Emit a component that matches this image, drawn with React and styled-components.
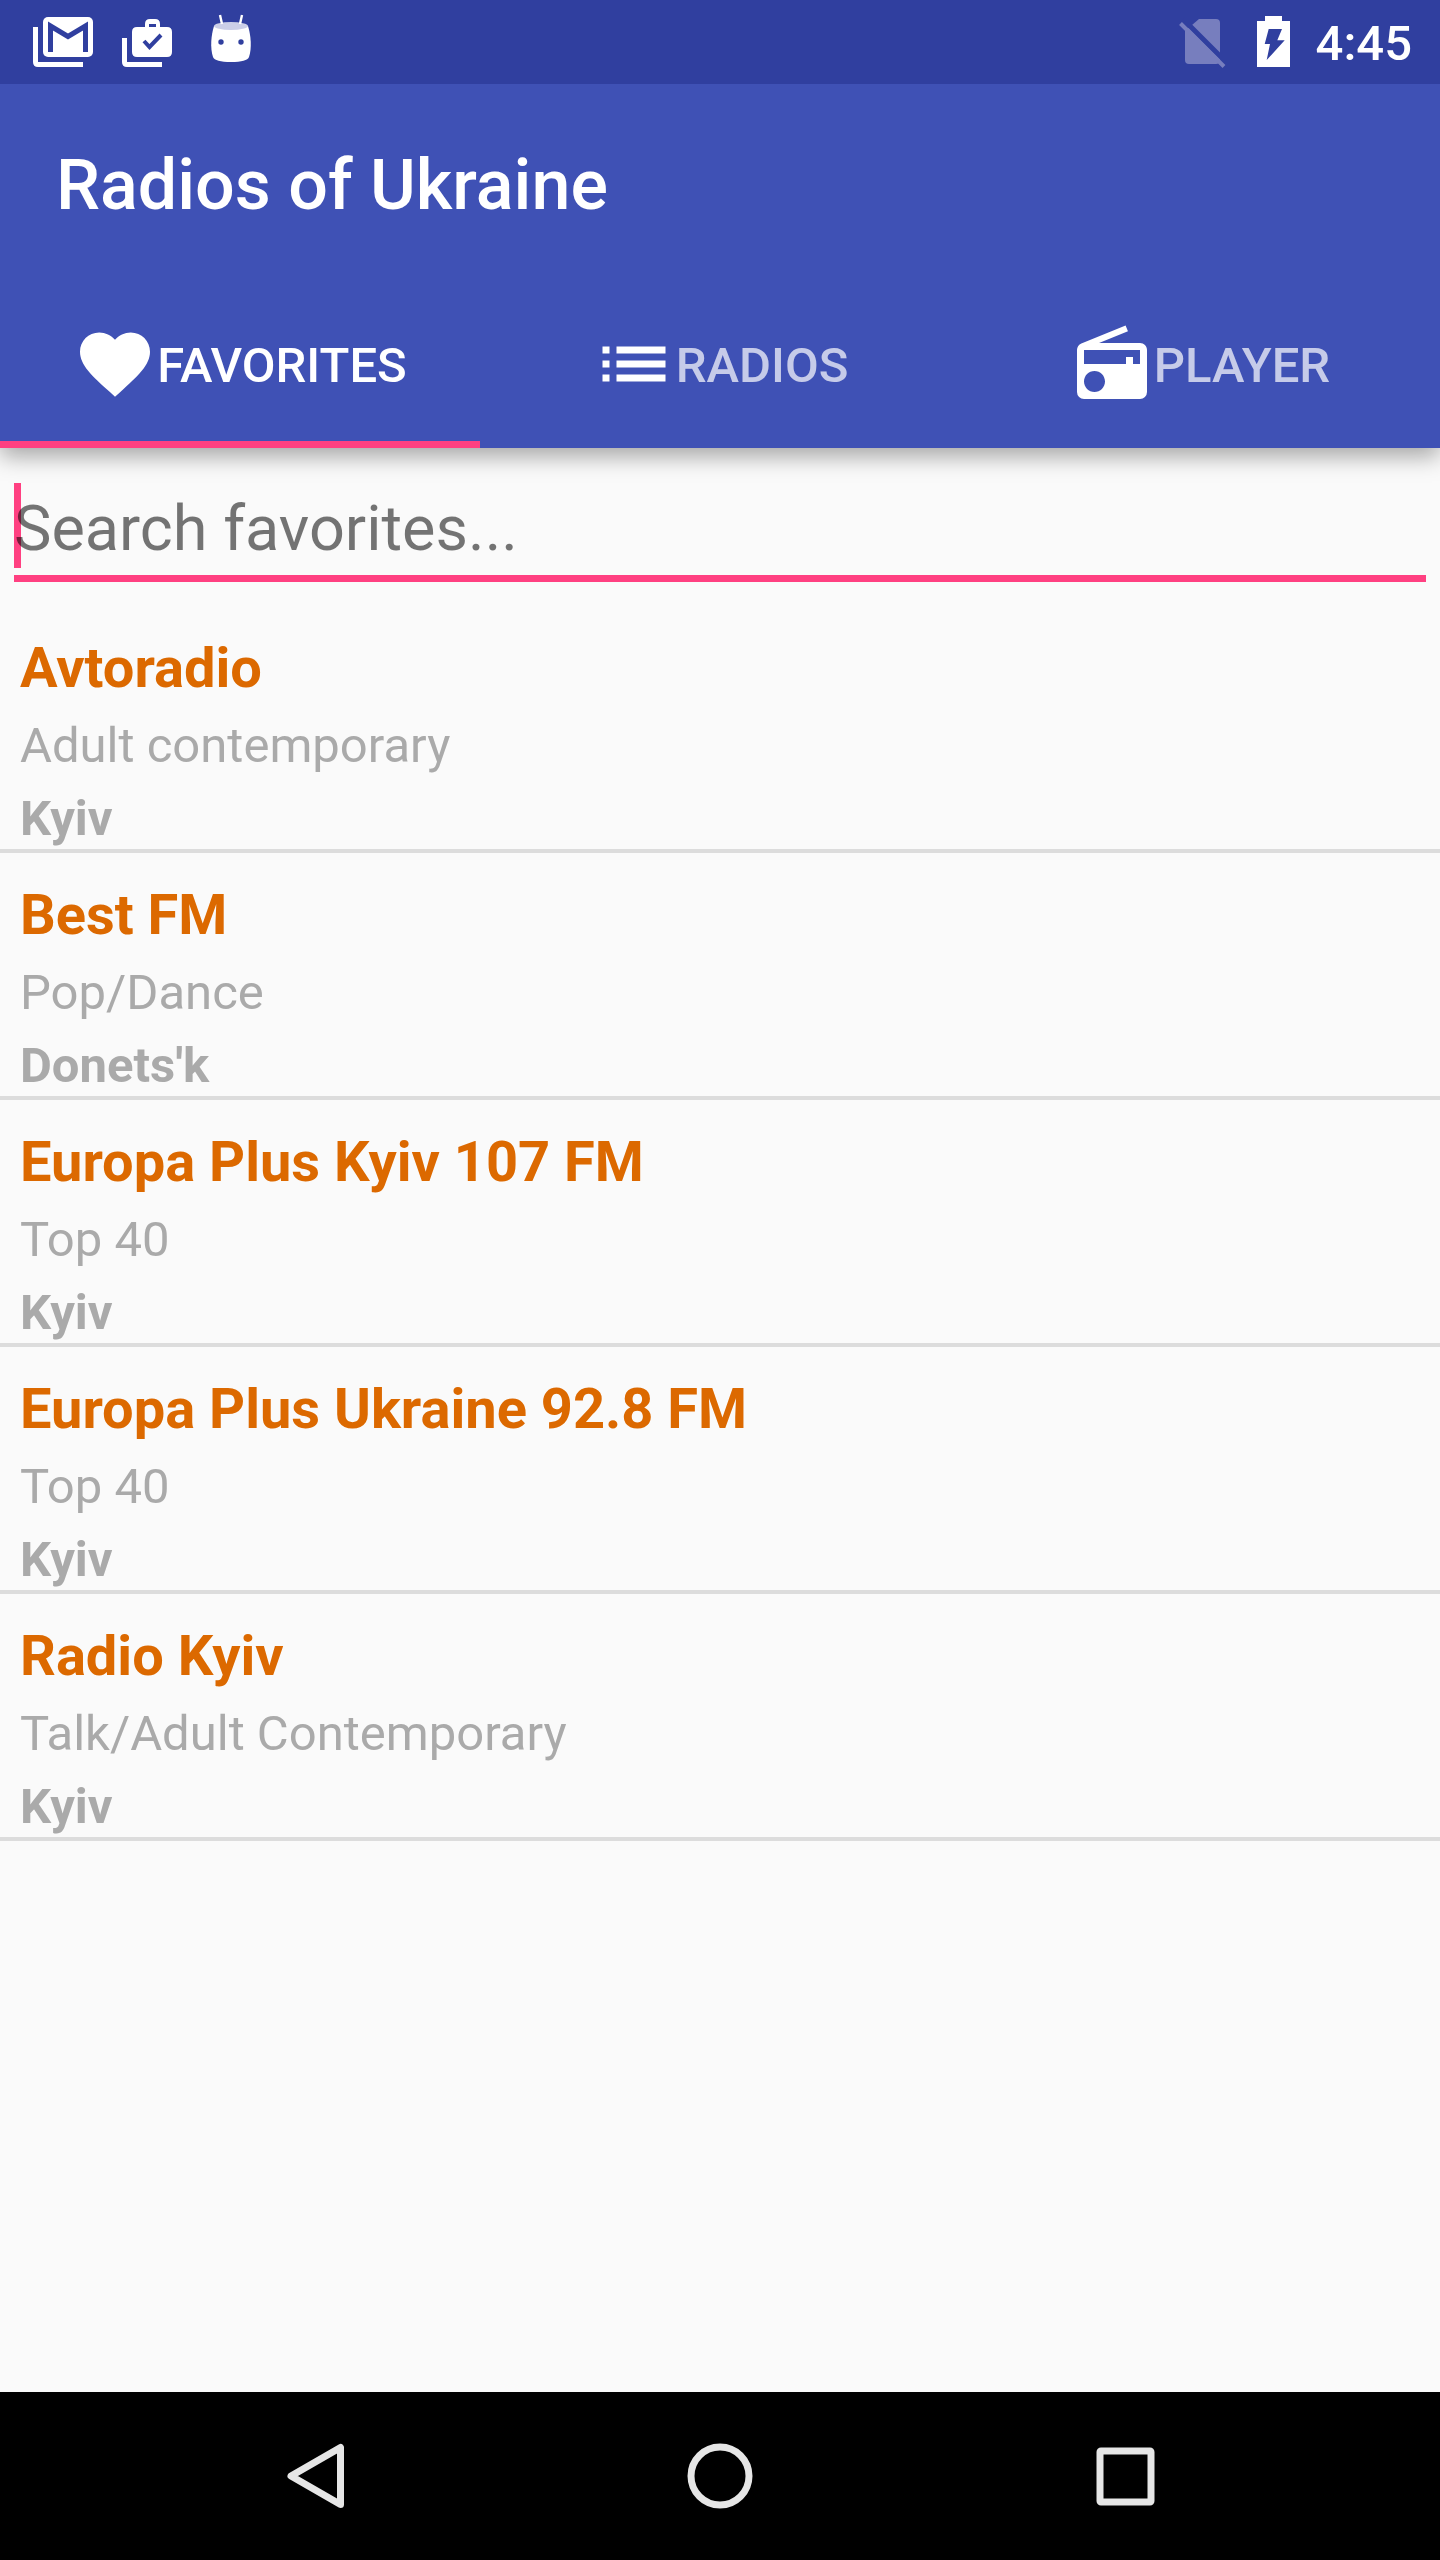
import React, { useState } from 'react';
import styled, { createGlobalStyle } from 'styled-components';
import { MdFavorite, MdList, MdRadio } from 'react-icons/md';

const stations = [
    { id: 1, name: 'Avtoradio', genre: 'Adult contemporary', city: 'Kyiv' },
    { id: 2, name: 'Best FM', genre: 'Pop/Dance', city: "Donets'k" },
    { id: 3, name: 'Europa Plus Kyiv 107 FM', genre: 'Top 40', city: 'Kyiv' },
    { id: 4, name: 'Europa Plus Ukraine 92.8 FM', genre: 'Top 40', city: 'Kyiv' },
    { id: 5, name: 'Radio Kyiv', genre: 'Talk/Adult Contemporary', city: 'Kyiv' },
];

const tabs = [
    { id: 'favorites', label: 'Favorites', Icon: MdFavorite },
    { id: 'radios', label: 'Radios', Icon: MdList },
    { id: 'player', label: 'Player', Icon: MdRadio },
];

const MailIcon = () => (
    <StatusIcon viewBox="0 0 60 60">
        <rect x="10" y="5" width="50" height="40" rx="5" fill="#fff" />
        <path d="M17.5 40V14L35 24.5 52.5 14V40" fill="none" stroke="#303f9f" strokeWidth="5" />
        <path d="M0 15h5v35h45v5H5q-5 0-5-5z" fill="#fff" />
    </StatusIcon>
);

const CaseIcon = () => (
    <StatusIcon viewBox="0 0 60 60">
        <path
            fillRule="evenodd"
            d="M28 15v-3q0-5 5-5h5q5 0 5 5v3h7q5 0 5 5v20q0 5-5 5H20q-5 0-5-5V20q0-5 5-5zM32 15h7v-3h-7z"
            fill="#fff"
        />
        <path d="M27 29l5.5 6L44 23" fill="none" stroke="#303f9f" strokeWidth="4" />
        <path d="M5 26h5v24h35v5H10q-5 0-5-5z" fill="#fff" />
    </StatusIcon>
);

const DroidIcon = () => (
    <StatusIcon viewBox="0 0 60 60">
        <path d="M13 14C10 24 9 36 12 45Q14 50 30 50Q46 50 48 45C51 36 50 24 47 14z" fill="#fff" />
        <ellipse cx="30" cy="14" rx="17" ry="4" fill="#cbcfe8" />
        <path d="M19 3l2 9M41 3l-2 9" stroke="#fff" strokeWidth="2.4" />
        <circle cx="20" cy="30" r="2.7" fill="#303f9f" />
        <circle cx="40" cy="30" r="2.7" fill="#303f9f" />
    </StatusIcon>
);

const NoSimIcon = () => (
    <StatusIcon viewBox="0 0 60 60">
        <path d="M27 7h17q4 0 4 4v37q0 4-4 4H17q-4 0-4-4V19z" fill="#777ebe" />
        <path d="M11 7L56 52" stroke="#303f9f" strokeWidth="5" />
        <path d="M8.5 11.5L52 54.5" stroke="#777ebe" strokeWidth="4" />
    </StatusIcon>
);

const BatteryIcon = () => (
    <StatusIcon viewBox="0 0 60 60">
        <path d="M21 4h17v5h8v46H13V9h8z" fill="#fff" />
        <path d="M24.7 17H38l-4.7 11.3h7.4L22.7 48 26 32h-5.3z" fill="#303f9f" />
    </StatusIcon>
);

const App = () => {
    const [active, setActive] = useState('favorites');
    const [query, setQuery] = useState('');
    const found = stations.filter(s => s.name.toLowerCase().includes(query.toLowerCase()));

    return (
        <Screen>
            <GlobalStyle />
            <StatusBar>
                <StatusGroup>
                    <MailIcon />
                    <CaseIcon />
                    <DroidIcon />
                </StatusGroup>
                <StatusGroup $tight>
                    <NoSimIcon />
                    <BatteryIcon />
                    <Clock>4:45</Clock>
                </StatusGroup>
            </StatusBar>
            <Header>
                <Title>Radios of Ukraine</Title>
                <Tabs role="tablist">
                    {tabs.map(({ id, label, Icon }) => (
                        <Tab
                            key={id}
                            role="tab"
                            aria-selected={active === id}
                            $active={active === id}
                            onClick={() => setActive(id)}
                        >
                            <Icon />
                            <span>{label}</span>
                        </Tab>
                    ))}
                </Tabs>
            </Header>
            <Main>
                <Search $empty={!query}>
                    <input
                        type="text"
                        aria-label="Search favorites"
                        placeholder="Search favorites..."
                        value={query}
                        onChange={e => setQuery(e.target.value)}
                    />
                </Search>
                <Stations>
                    {found.map(station => (
                        <Station key={station.id}>
                            <h2>{station.name}</h2>
                            <p>{station.genre}</p>
                            <strong>{station.city}</strong>
                        </Station>
                    ))}
                </Stations>
            </Main>
            <NavBar>
                <button aria-label="Back">
                    <svg viewBox="0 0 84 84">
                        <path d="M67.5 13.5v57L18 42z" />
                    </svg>
                </button>
                <button aria-label="Home">
                    <svg viewBox="0 0 84 84">
                        <circle cx="42" cy="42" r="29" />
                    </svg>
                </button>
                <button aria-label="Recent apps">
                    <svg viewBox="0 0 84 84">
                        <rect x="17" y="17" width="51" height="51" rx="1" />
                    </svg>
                </button>
            </NavBar>
        </Screen>
    );
};

const GlobalStyle = createGlobalStyle`
    * {
        box-sizing: border-box;
    }

    body {
        margin: 0;
        background: #fafafa;
        font-family: Roboto, sans-serif;
    }

    button {
        padding: 0;
        border: none;
        background: none;
        font: inherit;
        cursor: pointer;
    }
`;

const Screen = styled.div`
    display: flex;
    flex-direction: column;
    min-height: 100vh;
`;

const StatusBar = styled.div`
    position: relative;
    z-index: 1;
    display: flex;
    align-items: center;
    justify-content: space-between;
    height: 84px;
    padding: 0 28px 0 33px;
    background: #303f9f;
    color: #fff;
`;

const StatusGroup = styled.div`
    display: flex;
    align-items: center;
    gap: ${props => (props.$tight ? '12px' : '24px')};
`;

const StatusIcon = styled.svg`
    width: 60px;
    height: 60px;
`;

const Clock = styled.span`
    padding-top: 4px;
    font-size: 49px;
    font-weight: 500;
    line-height: 58px;
`;

const Header = styled.header`
    position: relative;
    background: #3f51b5;
    color: #fff;
    box-shadow: 0 8px 22px rgba(0, 0, 0, 0.35);
`;

const Title = styled.h1`
    display: flex;
    align-items: center;
    height: 196px;
    margin: 0;
    padding: 6px 56px 0;
    font-size: 70px;
    font-weight: 500;
`;

const Tabs = styled.div`
    display: flex;
`;

const Tab = styled.button`
    flex: 1;
    display: flex;
    align-items: center;
    justify-content: center;
    height: 168px;
    color: #fff;
    font-size: 49px;
    font-weight: 500;
    text-transform: uppercase;
    box-shadow: ${props => (props.$active ? 'inset 0 -7px #ff4081' : 'none')};

    svg {
        width: 84px;
        height: 84px;
    }

    span {
        padding-top: 3px;
        opacity: ${props => (props.$active ? 1 : 0.7)};
    }
`;

const Main = styled.main`
    flex: 1;
`;

const Search = styled.div`
    position: relative;
    margin: 35px 14px 24px;
    padding-bottom: 2px;
    border-bottom: 7px solid #ff4081;

    /* wide caret, sits under the hint text */
    &::before {
        content: '';
        display: ${props => (props.$empty ? 'block' : 'none')};
        position: absolute;
        top: 0;
        left: 0;
        width: 7px;
        height: 85px;
        background: #ff4081;
    }

    input {
        position: relative;
        display: block;
        width: 100%;
        height: 90px;
        padding: 0;
        border: none;
        outline: none;
        background: transparent;
        color: rgba(0, 0, 0, 0.87);
        caret-color: #ff4081;
        font: 400 63px Roboto, sans-serif;
    }

    input::placeholder {
        color: rgba(0, 0, 0, 0.54);
        opacity: 1;
    }
`;

const Stations = styled.ul`
    margin: 0;
    padding: 0;
    list-style: none;
`;

const Station = styled.li`
    display: flex;
    flex-direction: column;
    gap: 16px;
    padding: 29px 20px 2px;
    border-bottom: 4px solid #dcdcdc;
    color: #aaa;
    font-size: 49px;
    line-height: 57px;

    h2 {
        margin: 0;
        color: #dc6900;
        font-size: 56px;
        font-weight: 700;
        line-height: 66px;
    }

    p {
        margin: 0;
    }
`;

const NavBar = styled.nav`
    display: flex;
    height: 168px;
    padding: 0 112px;
    background: #000;

    button {
        flex: 1;
        display: flex;
        align-items: center;
        justify-content: center;
    }

    svg {
        width: 84px;
        height: 84px;
        fill: none;
        stroke: #e6e6e6;
        stroke-width: 7;
        stroke-linejoin: round;
    }
`;

export default App;
